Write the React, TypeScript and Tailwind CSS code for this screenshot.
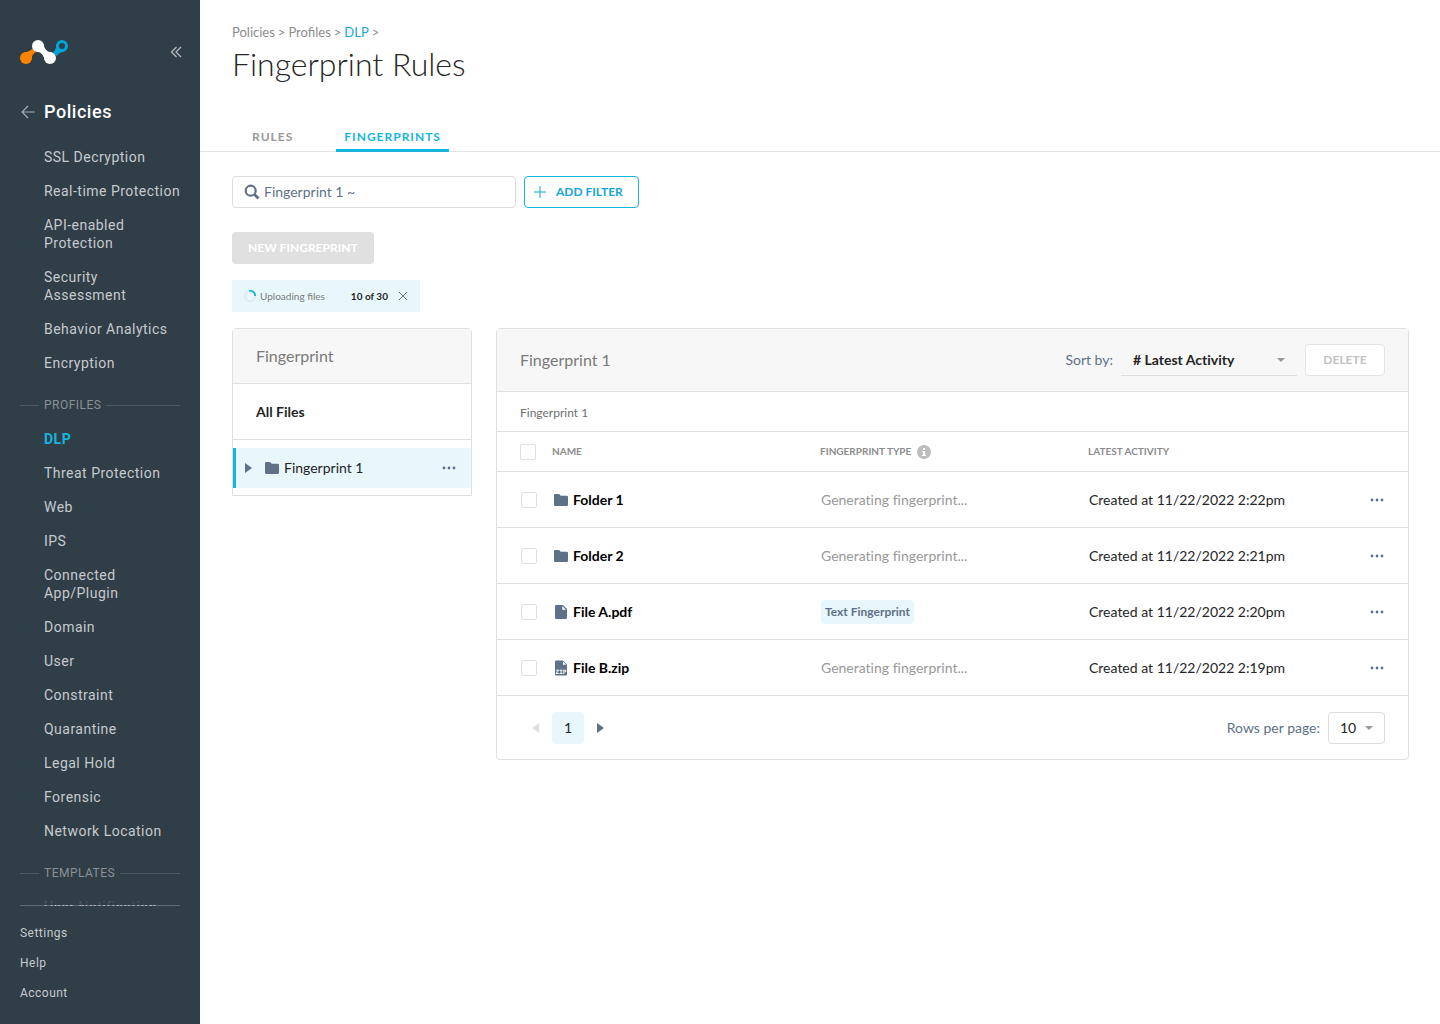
import { useState } from 'react';
import type { ReactNode } from 'react';

const policyLinks = [
    'SSL Decryption',
    'Real-time Protection',
    'API-enabled Protection',
    'Security Assessment',
    'Behavior Analytics',
    'Encryption',
];

const profileLinks = [
    'DLP',
    'Threat Protection',
    'Web',
    'IPS',
    'Connected App/Plugin',
    'Domain',
    'User',
    'Constraint',
    'Quarantine',
    'Legal Hold',
    'Forensic',
    'Network Location',
];

const rows = [
    { name: 'Folder 1', icon: 'folder', type: '', activity: 'Created at 11/22/2022 2:22pm' },
    { name: 'Folder 2', icon: 'folder', type: '', activity: 'Created at 11/22/2022 2:21pm' },
    { name: 'File A.pdf', icon: 'file', type: 'Text Fingerprint', activity: 'Created at 11/22/2022 2:20pm' },
    { name: 'File B.zip', icon: 'zip', type: '', activity: 'Created at 11/22/2022 2:19pm' },
];

const Logo = () => (
    <svg width="48" height="24" viewBox="0 0 48 24" aria-hidden="true">
        <path d="M4 12.300 Q10 12 13 8 L16 12 Q11 15 11.800 19 Z" fill="#ff8300" />
        <circle cx="6" cy="18" r="6" fill="#ff8300" />
        <path d="M37 16 L33 12.500 Q36.500 9 36.300 4 L44 11.700 Q39 12 37 16 Z" fill="#00a7d6" />
        <circle cx="42" cy="6" r="4.500" fill="#303e48" stroke="#00a7d6" strokeWidth="3" />
        <path d="M23.700 4 Q24 9 28 11.500 Q30 12.300 32 12.300 L24.300 20 Q24 15 20 12.500 Q18 12 16 11.700 Z" fill="#fff" />
        <circle cx="18" cy="6" r="6" fill="#fff" />
        <circle cx="30" cy="18" r="6" fill="#fff" />
    </svg>
);

const FolderIcon = () => (
    <svg width="14" height="12" viewBox="0 0 14 12" fill="#5f7186" aria-hidden="true">
        <path d="M1.200 0H5l1.800 1.800h6A1.200 1.200 0 0 1 14 3v7.800a1.200 1.200 0 0 1-1.200 1.200H1.200A1.200 1.200 0 0 1 0 10.800V1.200A1.200 1.200 0 0 1 1.200 0Z" />
    </svg>
);

const FileIcon = () => (
    <svg width="12" height="14" viewBox="0 0 12 14" aria-hidden="true">
        <path d="M1.200 0H8l4 4v8.800a1.200 1.200 0 0 1-1.200 1.200H1.200A1.200 1.200 0 0 1 0 12.800V1.200A1.200 1.200 0 0 1 1.200 0Z" fill="#5f7186" />
        <path d="M7.300 1v3.700H11Z" fill="#fff" />
    </svg>
);

const ZipIcon = () => (
    <svg width="12" height="16" viewBox="0 0 12 16" aria-hidden="true">
        <path d="M1 0.500H8l4 4V14.500a1 1 0 0 1-1 1H1a1 1 0 0 1-1-1V1.500A1 1 0 0 1 1 0.500Z" fill="#5f7186" />
        <path d="M8 1.500v3.300h3.300Z" fill="#fff" />
        <text x="6" y="13.500" textAnchor="middle" fontSize="6" fontWeight="900" fill="#fff" fontFamily="DejaVu Sans Mono, monospace">
            ZIP
        </text>
    </svg>
);

const Dots = () => (
    <svg width="14" height="4" viewBox="0 0 14 4" fill="#5f7186" aria-hidden="true">
        <circle cx="2" cy="2" r="1.400" />
        <circle cx="7" cy="2" r="1.400" />
        <circle cx="12" cy="2" r="1.400" />
    </svg>
);

const Caret = () => (
    <svg className="pointer-events-none absolute right-3 top-1/2 -translate-y-1/2" width="8" height="4" viewBox="0 0 8 4" fill="#999" aria-hidden="true">
        <path d="M0 0h8L4 4Z" />
    </svg>
);

const Triangle = ({ left = false }: { left?: boolean }) => (
    <svg width="7" height="10" viewBox="0 0 7 10" fill={left ? '#dfdfdf' : '#5f7186'} aria-hidden="true">
        <path d={left ? 'M7 0v10L0 5Z' : 'M0 0v10l7-5Z'} />
    </svg>
);

const Checkbox = ({ label }: { label: string }) => (
    <input
        type="checkbox"
        aria-label={label}
        className="block size-4 appearance-none rounded-xs border border-[#e0e0e0] bg-white checked:bg-[#17b5de]"
    />
);

const NavLink = ({ label, active = false }: { label: string; active?: boolean }) => (
    <li>
        <a href="#" className={active ? 'block font-bold text-[#17b5de]' : 'block text-[#c6cacd]'}>
            {label}
        </a>
    </li>
);

const NavDivider = ({ children }: { children: ReactNode }) => (
    <li className="mr-1 -ml-6 flex items-center gap-[5px] pt-2 text-xs leading-[18px] text-[#8a9196]">
        <span className="h-px w-[19px] bg-[#4c5a63]"></span>
        {children}
        <span className="h-px flex-1 bg-[#4c5a63]"></span>
    </li>
);

const Sidebar = () => (
    <aside className="sticky top-0 flex h-screen w-[200px] shrink-0 flex-col bg-[#303e48] pl-5 font-[Roboto,sans-serif] tracking-[0.03em]">
        <div className="flex items-center justify-between pt-10 pr-[18px]">
            <Logo />
            <button aria-label="Collapse menu">
                <svg width="12" height="12" viewBox="0 0 12 12" fill="none" stroke="#b4b9bd" strokeWidth="1.300" aria-hidden="true">
                    <path d="M6.500 1 1.500 6l5 5M11 1 6 6l5 5" />
                </svg>
            </button>
        </div>

        <a href="#" className="mt-9 flex items-center gap-2 text-lg leading-6 font-medium tracking-[0.03em] text-white">
            <svg width="16" height="14" viewBox="0 0 16 14" fill="none" stroke="#a5abb0" strokeWidth="1.200" aria-hidden="true">
                <path d="M15 7H2M8 1 2 7l6 6" />
            </svg>
            Policies
        </a>

        {/* the list runs on under the footer line and fades out there */}
        <nav className="relative z-10 mt-6 min-h-0 flex-1 overflow-hidden pr-4 pl-6 text-sm leading-[18px]">
            <ul className="flex flex-col gap-4">
                {policyLinks.map((label) => (
                    <NavLink key={label} label={label} />
                ))}
                <NavDivider>PROFILES</NavDivider>
                {profileLinks.map((label) => (
                    <NavLink key={label} label={label} active={label === 'DLP'} />
                ))}
                <NavDivider>TEMPLATES</NavDivider>
                <NavLink label="User Notification" />
            </ul>
            <div className="absolute inset-x-0 bottom-px h-4 bg-linear-to-b from-transparent to-[#303e48]"></div>
        </nav>

        <ul className="-mt-px mr-5 flex flex-col gap-3 border-t border-[#5d6b74] pt-[18px] pb-[22px] text-xs leading-[18px] text-[#c6cacd]">
            <li><a href="#">Settings</a></li>
            <li><a href="#">Help</a></li>
            <li><a href="#">Account</a></li>
        </ul>
    </aside>
);

const PageHeader = () => (
    <header className="border-b border-[#e4e4e4] px-8 pt-6">
        <nav aria-label="Breadcrumb" className="flex gap-[3px] text-[13px] leading-4 text-[#8c8c8c]">
            <a href="#">Policies</a>
            <span>&gt;</span>
            <a href="#">Profiles</a>
            <span>&gt;</span>
            <a href="#" className="text-[#17a5d6]">DLP</a>
            <span>&gt;</span>
        </nav>
        <h1 className="mt-1 text-[32px] leading-10 font-light text-[#252525]">Fingerprint Rules</h1>
        <div role="tablist" className="-mb-px mt-[45px] flex gap-[35px] pl-3 text-xs leading-4 font-bold tracking-[1px]">
            <button role="tab" aria-selected="false" className="px-2 pb-[7px] text-[#999]">RULES</button>
            <button role="tab" aria-selected="true" className="border-b-3 border-[#17b5de] px-2 pb-1 text-[#17b5de]">FINGERPRINTS</button>
        </div>
    </header>
);

const FingerprintTree = () => (
    <section className="w-60 shrink-0 rounded-t border border-[#e0e0e0]">
        <h2 className="flex h-[55px] items-center border-b border-[#e0e0e0] bg-[#f7f7f7] px-[23px] text-base text-[#7a7a7a]">
            Fingerprint
        </h2>
        <a href="#" className="flex h-14 items-center border-b border-[#e0e0e0] px-[23px] text-sm font-bold text-[#252525]">
            All Files
        </a>
        <div className="pt-2 pb-[7px]">
            <div className="flex h-10 items-center border-l-3 border-[#17b5de] bg-[#e7f7fc] pr-[15px] pl-[9px]">
                <button aria-label="Expand Fingerprint 1"><Triangle /></button>
                <a href="#" className="ml-[13px] flex flex-1 items-center gap-[5px] text-sm text-[#252525]">
                    <FolderIcon />
                    Fingerprint 1
                </a>
                <button aria-label="More actions"><Dots /></button>
            </div>
        </div>
    </section>
);

const FingerprintTable = () => (
    <section className="min-w-0 flex-1 rounded border border-[#e0e0e0] [font-variant-ligatures:no-common-ligatures]">
        <div className="flex h-[63px] items-center justify-between border-b border-[#e0e0e0] bg-[#f7f7f7] px-[23px]">
            <h2 className="text-base text-[#7a7a7a]">Fingerprint 1</h2>
            <div className="flex items-center gap-2">
                <label htmlFor="sort" className="text-sm text-[#5f7186]">Sort by:</label>
                <div className="relative">
                    <select id="sort" className="h-8 w-44 appearance-none border-b border-[#dcdcdc] px-3 text-sm font-bold text-[#252525] [font-variant-ligatures:inherit]">
                        <option># Latest Activity</option>
                    </select>
                    <Caret />
                </div>
                <button disabled className="h-8 w-20 rounded border border-[#e4e4e4] bg-white text-xs font-bold text-[#c2c2c2]">
                    DELETE
                </button>
            </div>
        </div>
        <div className="flex h-10 items-center border-b border-[#e0e0e0] px-[23px] pt-0.5 text-xs text-[#6e6e6e]">Fingerprint 1</div>
        <table className="w-full table-fixed border-separate border-spacing-0 text-left text-sm text-[#252525]">
            <thead className="text-[10px] text-[#8c8c8c]">
                <tr className="*:h-10 *:border-b *:border-[#e0e0e0] *:p-0 *:font-bold">
                    <th className="w-[55px]"><div className="pl-[23px]"><Checkbox label="Select all" /></div></th>
                    <th className="w-[268px]">NAME</th>
                    <th className="w-[268px]">
                        <span className="flex items-center gap-1.5">
                            FINGERPRINT TYPE
                            <svg width="14" height="14" viewBox="0 0 14 14" aria-hidden="true">
                                <circle cx="7" cy="7" r="7" fill="#bdbdbd" />
                                <path d="M6 3h2v2H6ZM5 6h3v4h1v1H5v-1h1V7H5Z" fill="#fff" />
                            </svg>
                        </span>
                    </th>
                    <th>LATEST ACTIVITY</th>
                    <th className="w-[62px]"></th>
                </tr>
            </thead>
            <tbody>
                {rows.map((row) => (
                    <tr key={row.name} className="*:h-14 *:border-b *:border-[#e0e0e0]">
                        <td className="pl-6"><Checkbox label={`Select ${row.name}`} /></td>
                        <td>
                            <a href="#" className="flex items-center gap-1 font-bold text-black">
                                <span className="flex w-[17px] justify-center">
                                    {row.icon === 'folder' && <FolderIcon />}
                                    {row.icon === 'file' && <FileIcon />}
                                    {row.icon === 'zip' && <ZipIcon />}
                                </span>
                                {row.name}
                            </a>
                        </td>
                        <td className="pl-px text-[#999]">
                            {row.type ? (
                                <span className="inline-flex h-6 items-center rounded bg-[#e7f7fc] px-1 text-xs font-bold text-[#5f7186]">{row.type}</span>
                            ) : (
                                'Generating fingerprint...'
                            )}
                        </td>
                        <td className="pl-px">{row.activity}</td>
                        <td className="pr-6">
                            <button aria-label={`Actions for ${row.name}`} className="ml-auto block"><Dots /></button>
                        </td>
                    </tr>
                ))}
            </tbody>
        </table>
        <div className="flex h-[63px] items-center justify-between px-[23px] text-sm">
            <div className="flex items-center gap-[13px] pl-3">
                <button aria-label="Previous page" disabled><Triangle left /></button>
                <button className="size-8 rounded bg-[#e7f7fc] text-[#252525]">1</button>
                <button aria-label="Next page"><Triangle /></button>
            </div>
            <div className="flex items-center gap-2">
                <label htmlFor="page-size" className="text-[#5f7186]">Rows per page:</label>
                <div className="relative">
                    <select id="page-size" className="h-8 w-[57px] appearance-none rounded border border-[#dcdcdc] bg-white pl-[11px] text-[#252525]">
                        <option>10</option>
                    </select>
                    <Caret />
                </div>
            </div>
        </div>
    </section>
);

export default function App() {
    const [query, setQuery] = useState('Fingerprint 1 ~');

    return (
        <div className="flex min-h-screen bg-white font-[Lato,sans-serif]">
            <Sidebar />
            <main className="min-w-0 flex-1">
                <PageHeader />
                <div className="pt-6 pr-[31px] pb-8 pl-8">
                    <div className="flex gap-2">
                        <label className="flex h-8 w-[284px] items-center gap-1 rounded border border-[#dcdcdc] px-[11px]">
                            <svg width="16" height="16" viewBox="0 0 16 16" fill="none" stroke="#5f7186" aria-hidden="true">
                                <circle cx="6.700" cy="6.700" r="5" strokeWidth="2.200" />
                                <path d="m10.500 10.500 4 4" strokeWidth="2.800" />
                            </svg>
                            <input
                                type="text"
                                aria-label="Search fingerprints"
                                value={query}
                                onChange={(e) => setQuery(e.target.value)}
                                className="min-w-0 flex-1 text-sm text-[#5f7186] outline-none"
                            />
                        </label>
                        <button className="flex h-8 items-center gap-2.5 rounded border border-[#17b5de] pr-[15px] pl-[9px] text-xs font-bold text-[#17a5d6]">
                            <svg width="12" height="12" viewBox="0 0 12 12" stroke="#17a5d6" aria-hidden="true">
                                <path d="M6 0v12M0 6h12" />
                            </svg>
                            ADD FILTER
                        </button>
                    </div>

                    <button disabled className="mt-6 block h-8 rounded bg-[#e0e0e0] px-4 text-xs font-bold text-white">
                        NEW FINGREPRINT
                    </button>

                    <div className="mt-4 flex h-8 w-fit items-center bg-[#e7f7fc] px-3 text-[10px]">
                        <svg width="12" height="12" viewBox="0 0 12 12" fill="none" strokeWidth="1.500" aria-hidden="true">
                            <circle cx="6" cy="6" r="5.200" stroke="#e4e4e4" />
                            <path d="M5 0.800A5.200 5.200 0 0 1 11.200 6" stroke="#17b5de" strokeWidth="1.800" />
                        </svg>
                        <span className="ml-1 text-[#7a7a7a]">Uploading files</span>
                        <span className="ml-[26px] font-bold text-[#252525]">10 of 30</span>
                        <button aria-label="Cancel upload" className="ml-2.5">
                            <svg width="10" height="10" viewBox="0 0 10 10" stroke="#5f7186" aria-hidden="true">
                                <path d="m1 1 8 8M9 1 1 9" />
                            </svg>
                        </button>
                    </div>

                    <div className="mt-4 flex items-start gap-6">
                        <FingerprintTree />
                        <FingerprintTable />
                    </div>
                </div>
            </main>
        </div>
    );
}
